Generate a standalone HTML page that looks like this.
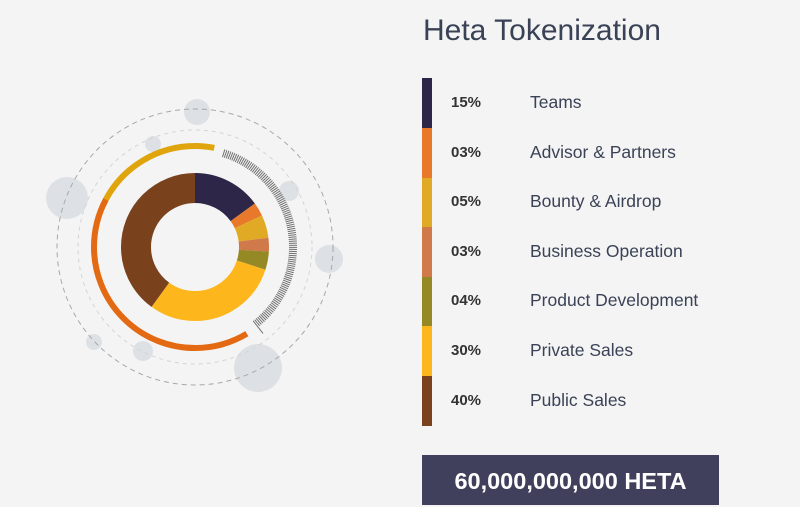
<!DOCTYPE html>
<html><head><meta charset="utf-8"><style>
body{margin:0;width:800px;height:505px;background:#f4f4f4;overflow:hidden;position:relative;font-family:"Liberation Sans",Arial,sans-serif}
h1{position:absolute;left:423px;top:14px;margin:0;font-weight:normal;font-size:30px;color:#3a4256}
.bar{position:absolute;left:422px;width:10px;height:50px}
.p{position:absolute;left:451px;font-weight:bold;font-size:15px;color:#333}
.l{position:absolute;left:530px;font-size:17.5px;color:#3a4256}
.box{position:absolute;left:422px;top:455px;width:297px;height:50px;background:#40405c;color:#fff;font-weight:bold;font-size:23.5px;text-align:center;line-height:52px}
</style></head><body>
<svg width="400" height="505" style="position:absolute;left:0;top:0">
<g fill="#dde1e5">
<circle cx="197" cy="112" r="13"/><circle cx="153" cy="144" r="8"/><circle cx="67" cy="198" r="21"/><circle cx="289" cy="191" r="10"/><circle cx="329" cy="259" r="14"/><circle cx="94" cy="342" r="8"/><circle cx="143" cy="351" r="10"/><circle cx="258" cy="368" r="24"/>
</g>
<circle cx="195" cy="247" r="138" fill="none" stroke="#a8a8a8" stroke-width="1" stroke-dasharray="5 4"/>
<circle cx="195" cy="247" r="117" fill="none" stroke="#d4d4d4" stroke-width="1" stroke-dasharray="4 4"/>
<g transform="rotate(-90 195 247)" fill="none">
<circle cx="195" cy="247" r="101" stroke="#e0a50c" stroke-width="6" stroke-dasharray="109.4 634.6" stroke-dashoffset="-525.2"/>
<circle cx="195" cy="247" r="101" stroke="#e0a50c" stroke-width="6" stroke-dasharray="19.4 634.6" stroke-dashoffset="0"/>
<circle cx="195" cy="247" r="101" stroke="#e36a12" stroke-width="6" stroke-dasharray="262.6 634.6" stroke-dashoffset="-262.7"/>
<g stroke-width="30">
<circle cx="195" cy="247" r="59" stroke="#2d2648" stroke-dasharray="55.6 371" stroke-dashoffset="0"/>
<circle cx="195" cy="247" r="59" stroke="#e8792a" stroke-dasharray="11.1 371" stroke-dashoffset="-55.6"/>
<circle cx="195" cy="247" r="59" stroke="#e0aa25" stroke-dasharray="18.5 371" stroke-dashoffset="-66.7"/>
<circle cx="195" cy="247" r="59" stroke="#d07a4c" stroke-dasharray="11.1 371" stroke-dashoffset="-85.2"/>
<circle cx="195" cy="247" r="59" stroke="#948925" stroke-dasharray="14.8 371" stroke-dashoffset="-96.3"/>
<circle cx="195" cy="247" r="59" stroke="#fdb61c" stroke-dasharray="111.2 371" stroke-dashoffset="-111.1"/>
<circle cx="195" cy="247" r="59" stroke="#7a411d" stroke-dasharray="148.4 371" stroke-dashoffset="-222.3"/>
</g></g>
<g id="t" stroke="#707070" stroke-width="1"></g>
</svg>
<script>
var g=document.getElementById('t'),s='';
for(var a=17;a<=142;a+=1.2){var r=a*Math.PI/180,sn=Math.sin(r),c=-Math.cos(r);
var r1=94,r2=102;if(a>141){r2=110;}
s+='<line x1="'+(195+r1*sn)+'" y1="'+(247+r1*c)+'" x2="'+(195+r2*sn)+'" y2="'+(247+r2*c)+'"/>';}
g.innerHTML=s;
</script>
<h1>Heta Tokenization</h1>
<div class="bar" style="top:78px;background:#2d2648"></div>
<div class="bar" style="top:128px;background:#e8792a"></div>
<div class="bar" style="top:178px;background:#e0aa25"></div>
<div class="bar" style="top:227px;background:#d07a4c"></div>
<div class="bar" style="top:277px;background:#948925"></div>
<div class="bar" style="top:326px;background:#fdb61c"></div>
<div class="bar" style="top:376px;background:#7a411d"></div>
<div class="p" style="top:94px">15%</div><div class="l" style="top:92px">Teams</div>
<div class="p" style="top:144px">03%</div><div class="l" style="top:142px">Advisor &amp; Partners</div>
<div class="p" style="top:193px">05%</div><div class="l" style="top:191px">Bounty &amp; Airdrop</div>
<div class="p" style="top:243px">03%</div><div class="l" style="top:241px">Business Operation</div>
<div class="p" style="top:292px">04%</div><div class="l" style="top:290px">Product Development</div>
<div class="p" style="top:342px">30%</div><div class="l" style="top:340px">Private Sales</div>
<div class="p" style="top:392px">40%</div><div class="l" style="top:390px">Public Sales</div>
<div class="box">60,000,000,000 HETA</div>
</body></html>
